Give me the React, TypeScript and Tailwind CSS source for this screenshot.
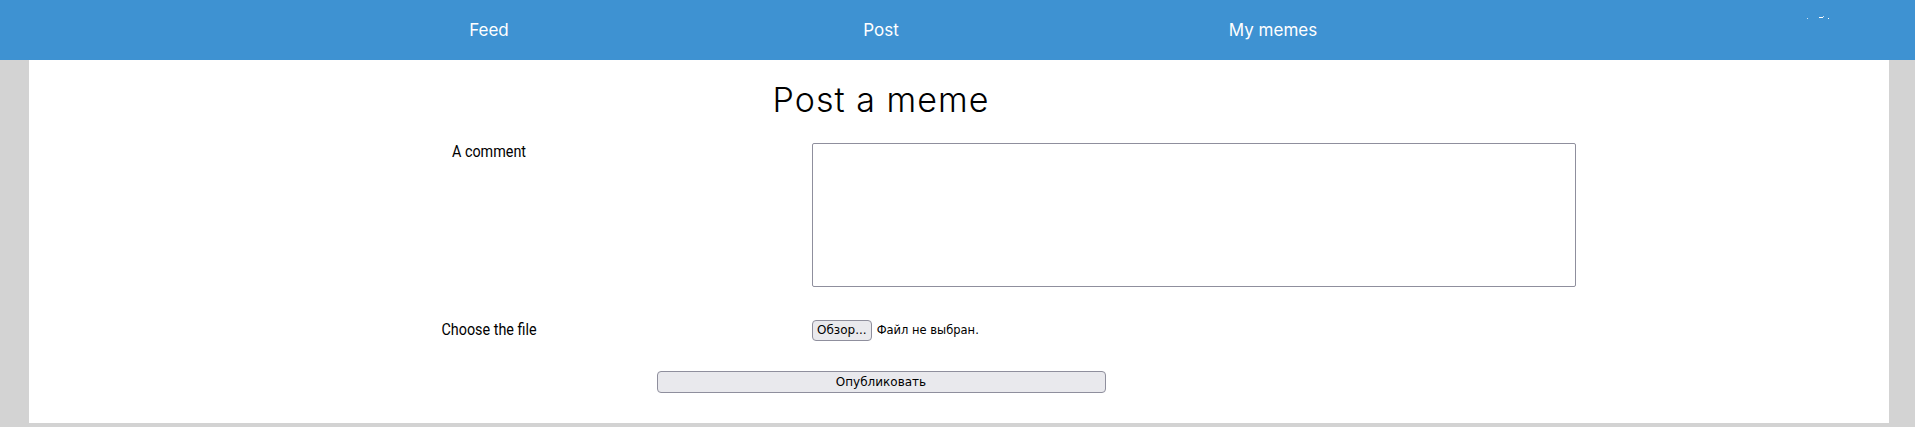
import React from 'react'

const navItems = ['Feed', 'Post', 'My memes']

export default function App() {
  return (
    <div className="min-h-[427px] bg-[#d3d3d3] font-['Roboto',sans-serif] text-black">
      <header className="relative flex h-[60px] items-center bg-[#3e92d2] pl-[293px]">
        {navItems.map((item) => (
          <a
            key={item}
            href="#"
            className="w-[392px] text-center font-['Inter',sans-serif] text-[17px] leading-[20px] text-white"
          >
            {item}
          </a>
        ))}
        {/* tiny broken avatar in the corner */}
        <svg className="absolute left-[1807px] top-[15px]" width="30" height="6" viewBox="0 0 30 6">
          <rect x="0" y="3" width="1" height="1" fill="#cfe3f5" />
          <rect x="12" y="2" width="4" height="1" fill="#ffffff" />
          <rect x="16" y="1" width="1" height="1" fill="#cfe3f5" />
          <rect x="21" y="3" width="1" height="1" fill="#ffffff" />
        </svg>
      </header>

      <main className="ml-[29px] h-[363px] w-[1860px] bg-white">
        <div className="ml-[264px] w-[1176px]">
          <h1 className="pt-[20px] text-center font-['Inter',sans-serif] text-[34px] font-light leading-[40px] tracking-[0.03em]">
            Post a meme
          </h1>

          <form className="mt-[23px]" onSubmit={(e) => e.preventDefault()}>
            <div className="grid grid-cols-[392px_764px] gap-x-[127px]">
              <label className="-mt-[2px] block scale-x-[0.845] text-center text-[17px] leading-[20px]">
                A comment
              </label>
              <textarea className="h-[144px] resize-none rounded-[2px] border border-[#8f8f9d] bg-white" />
            </div>

            <div className="mt-[33px] grid grid-cols-[392px_764px] items-center gap-x-[127px]">
              <label className="-mt-[4px] block scale-x-[0.845] text-center text-[17px] leading-[20px]">
                Choose the file
              </label>
              <div className="flex items-center gap-[5px] font-['DejaVu_Sans',sans-serif] text-[12px]">
                <button
                  type="button"
                  className="h-[21px] rounded-[4px] border border-[#8f8f9d] bg-[#e9e9ed] px-[4px] leading-[19px]"
                >
                  Обзор...
                </button>
                <span className="text-[11.5px]">Файл не выбран.</span>
              </div>
            </div>

            <button
              type="submit"
              className="mx-auto mt-[30px] block h-[22px] w-[449px] rounded-[4px] border border-[#8f8f9d] bg-[#e9e9ed] font-['DejaVu_Sans',sans-serif] text-[12px] leading-[20px]"
            >
              Опубликовать
            </button>
          </form>
        </div>
      </main>
    </div>
  )
}
